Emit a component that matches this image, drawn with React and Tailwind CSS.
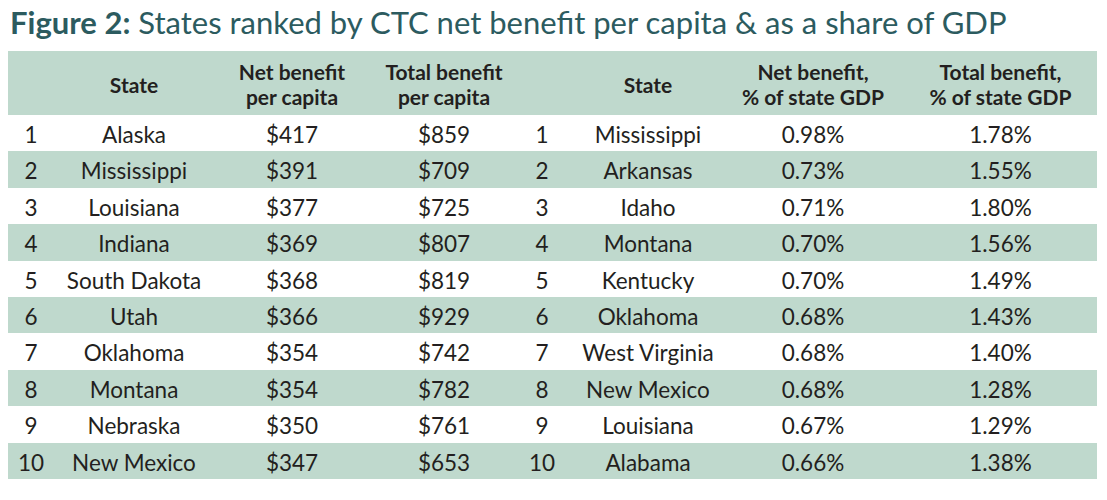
const left = [
  ["1", "Alaska", "$417", "$859"],
  ["2", "Mississippi", "$391", "$709"],
  ["3", "Louisiana", "$377", "$725"],
  ["4", "Indiana", "$369", "$807"],
  ["5", "South Dakota", "$368", "$819"],
  ["6", "Utah", "$366", "$929"],
  ["7", "Oklahoma", "$354", "$742"],
  ["8", "Montana", "$354", "$782"],
  ["9", "Nebraska", "$350", "$761"],
  ["10", "New Mexico", "$347", "$653"],
];

const right = [
  ["1", "Mississippi", "0.98%", "1.78%"],
  ["2", "Arkansas", "0.73%", "1.55%"],
  ["3", "Idaho", "0.71%", "1.80%"],
  ["4", "Montana", "0.70%", "1.56%"],
  ["5", "Kentucky", "0.70%", "1.49%"],
  ["6", "Oklahoma", "0.68%", "1.43%"],
  ["7", "West Virginia", "0.68%", "1.40%"],
  ["8", "New Mexico", "0.68%", "1.28%"],
  ["9", "Louisiana", "0.67%", "1.29%"],
  ["10", "Alabama", "0.66%", "1.38%"],
];

const cols = "grid grid-cols-[46px_160px_156px_148px_48px_164px_166px_1fr]";

export default function App() {
  return (
    <div className="w-[1107px] h-[500px] bg-white font-['Lato','Liberation_Sans',sans-serif] text-[#231f20]">
      <h1 className="pl-[10px] pt-[4px] mb-[11px] text-[31px] leading-[36px] text-[#2c5b5f] whitespace-nowrap">
        <span className="font-bold">Figure 2:</span> States ranked by CTC net benefit per capita &amp; as a share of GDP
      </h1>
      <div className="mx-[8px] w-[1089px]">
        <div className={`${cols} h-[64px] pt-[2px] items-center bg-[#bfd9cd] text-[21px] leading-[25px] font-bold text-center`}>
          <div></div>
          <div>State</div>
          <div>Net benefit<br />per capita</div>
          <div>Total benefit<br />per capita</div>
          <div></div>
          <div>State</div>
          <div>Net benefit,<br />% of state GDP</div>
          <div className="pl-2">Total benefit,<br />% of state GDP</div>
        </div>
        {left.map((row, i) => {
          const r = right[i];
          return (
            <div
              key={i}
              className={`${cols} h-[36.4px] pt-[3px] items-center text-[22.5px] text-center ${i % 2 === 1 ? "bg-[#bfd9cd]" : "bg-white"}`}
            >
              <div>{row[0]}</div>
              <div>{row[1]}</div>
              <div>{row[2]}</div>
              <div>{row[3]}</div>
              <div>{r[0]}</div>
              <div>{r[1]}</div>
              <div>{r[2]}</div>
              <div className="pl-2">{r[3]}</div>
            </div>
          );
        })}
      </div>
    </div>
  );
}
